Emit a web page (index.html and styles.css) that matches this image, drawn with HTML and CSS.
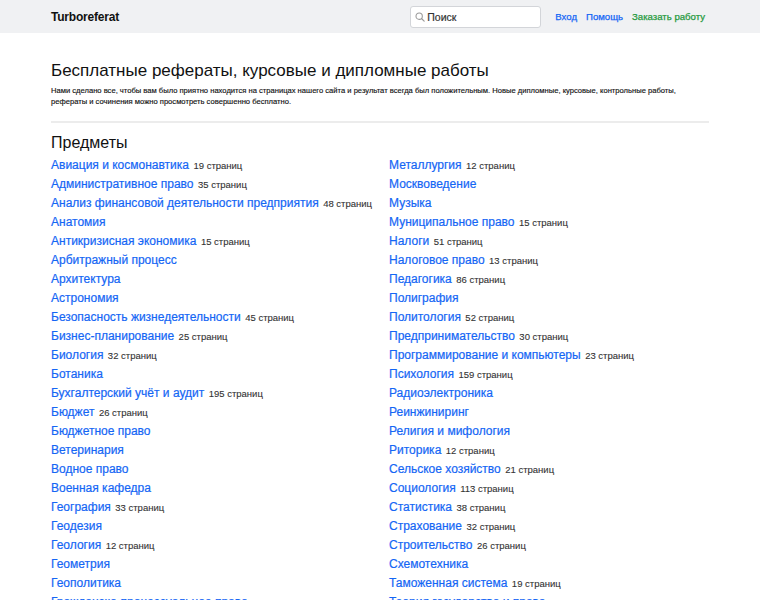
FILE: index.html
```html
<!DOCTYPE html>
<html lang="ru">
<head>
    <meta charset="UTF-8">
    <meta name="viewport" content="width=device-width, initial-scale=1.0">
    <title>Turboreferat</title>
    <link rel="stylesheet" href="styles.css">
</head>
<body>
    <header class="topbar">
        <div class="container topbar-inner">
            <a class="logo" href="#">Turboreferat</a>
            <div class="search">
                <svg class="search-icon" width="10" height="10" viewBox="0 0 12 12">
                    <circle cx="5" cy="5" r="3.8" fill="none" stroke="#9a9a9a" stroke-width="1.3"/>
                    <line x1="7.8" y1="7.8" x2="11" y2="11" stroke="#9a9a9a" stroke-width="1.4" stroke-linecap="round"/>
                </svg>
                <input type="text" placeholder="Поиск">
            </div>
            <nav class="nav">
                <a href="#">Вход</a>
                <a href="#">Помощь</a>
                <a href="#" class="order">Заказать работу</a>
            </nav>
        </div>
    </header>

    <main class="container">
        <h1>Бесплатные рефераты, курсовые и дипломные работы</h1>
        <p class="intro">Нами сделано все, чтобы вам было приятно находится на страницах нашего сайта и результат всегда был положительным. Новые дипломные, курсовые, контрольные работы, рефераты и сочинения можно просмотреть совершенно бесплатно.</p>
        <hr>

        <div class="subjects">
            <div class="col">
                <h2>Предметы</h2>
                <ul>
                    <li><a href="#">Авиация и космонавтика</a> <span>19 страниц</span></li>
                    <li><a href="#">Административное право</a> <span>35 страниц</span></li>
                    <li><a href="#">Анализ финансовой деятельности предприятия</a> <span>48 страниц</span></li>
                    <li><a href="#">Анатомия</a></li>
                    <li><a href="#">Антикризисная экономика</a> <span>15 страниц</span></li>
                    <li><a href="#">Арбитражный процесс</a></li>
                    <li><a href="#">Архитектура</a></li>
                    <li><a href="#">Астрономия</a></li>
                    <li><a href="#">Безопасность жизнедеятельности</a> <span>45 страниц</span></li>
                    <li><a href="#">Бизнес-планирование</a> <span>25 страниц</span></li>
                    <li><a href="#">Биология</a> <span>32 страниц</span></li>
                    <li><a href="#">Ботаника</a></li>
                    <li><a href="#">Бухгалтерский учёт и аудит</a> <span>195 страниц</span></li>
                    <li><a href="#">Бюджет</a> <span>26 страниц</span></li>
                    <li><a href="#">Бюджетное право</a></li>
                    <li><a href="#">Ветеринария</a></li>
                    <li><a href="#">Водное право</a></li>
                    <li><a href="#">Военная кафедра</a></li>
                    <li><a href="#">География</a> <span>33 страниц</span></li>
                    <li><a href="#">Геодезия</a></li>
                    <li><a href="#">Геология</a> <span>12 страниц</span></li>
                    <li><a href="#">Геометрия</a></li>
                    <li><a href="#">Геополитика</a></li>
                    <li><a href="#">Гражданско-процессуальное право</a> <span>12 страниц</span></li>
                </ul>
            </div>
            <div class="col">
                <h2 class="spacer">&nbsp;</h2>
                <ul>
                    <li><a href="#">Металлургия</a> <span>12 страниц</span></li>
                    <li><a href="#">Москвоведение</a></li>
                    <li><a href="#">Музыка</a></li>
                    <li><a href="#">Муниципальное право</a> <span>15 страниц</span></li>
                    <li><a href="#">Налоги</a> <span>51 страниц</span></li>
                    <li><a href="#">Налоговое право</a> <span>13 страниц</span></li>
                    <li><a href="#">Педагогика</a> <span>86 страниц</span></li>
                    <li><a href="#">Полиграфия</a></li>
                    <li><a href="#">Политология</a> <span>52 страниц</span></li>
                    <li><a href="#">Предпринимательство</a> <span>30 страниц</span></li>
                    <li><a href="#">Программирование и компьютеры</a> <span>23 страниц</span></li>
                    <li><a href="#">Психология</a> <span>159 страниц</span></li>
                    <li><a href="#">Радиоэлектроника</a></li>
                    <li><a href="#">Реинжиниринг</a></li>
                    <li><a href="#">Религия и мифология</a></li>
                    <li><a href="#">Риторика</a> <span>12 страниц</span></li>
                    <li><a href="#">Сельское хозяйство</a> <span>21 страниц</span></li>
                    <li><a href="#">Социология</a> <span>113 страниц</span></li>
                    <li><a href="#">Статистика</a> <span>38 страниц</span></li>
                    <li><a href="#">Страхование</a> <span>32 страниц</span></li>
                    <li><a href="#">Строительство</a> <span>26 страниц</span></li>
                    <li><a href="#">Схемотехника</a></li>
                    <li><a href="#">Таможенная система</a> <span>19 страниц</span></li>
                    <li><a href="#">Теория государства и права</a> <span>27 страниц</span></li>
                </ul>
            </div>
        </div>
    </main>
</body>
</html>
```

FILE: styles.css
```css
body {
    font-family: "Liberation Sans", Arial, sans-serif;
    color: #111;
    background-color: #fff;
    margin: 0;
    padding: 0;
}
a {
    text-decoration: none;
}
.container {
    width: 658px;
    margin: 0 auto;
}
.topbar {
    background-color: #f0f1f3;
    height: 33px;
}
.topbar-inner {
    display: flex;
    align-items: center;
    height: 33px;
}
.logo {
    color: #111;
    font-weight: bold;
    font-size: 12px;
    letter-spacing: -0.2px;
}
.search {
    margin-left: auto;
    position: relative;
}
.search-icon {
    position: absolute;
    left: 5px;
    top: 6px;
}
.search input {
    display: block;
    width: 131px;
    height: 22px;
    box-sizing: border-box;
    border: 1px solid #d3d5d9;
    border-radius: 3px;
    padding: 0 0 0 16px;
    font-family: inherit;
    font-size: 10.5px;
    background: #fff;
    -webkit-text-stroke: 0.2px;
}
.search input::placeholder {
    color: #333;
}
.nav {
    display: flex;
    gap: 9px;
    margin-left: 14px;
    margin-right: 4px;
}
.nav a {
    color: #1466f5;
    font-size: 9.6px;
    -webkit-text-stroke: 0.25px;
}
.nav a.order {
    color: #279a3e;
}
h1 {
    font-size: 17px;
    font-weight: normal;
    margin: 28px 0 4px;
}
.intro {
    font-size: 7.6px;
    line-height: 11px;
    margin: 0;
    -webkit-text-stroke: 0.15px;
}
hr {
    border: none;
    border-top: 2px solid #ececec;
    margin: 14px 0 0;
}
.subjects {
    display: grid;
    grid-template-columns: minmax(0, 1fr) minmax(0, 1fr);
    column-gap: 18px;
}
h2 {
    font-size: 16px;
    font-weight: normal;
    margin: 10px 0 0;
    line-height: 20px;
}
ul {
    list-style: none;
    margin: 1px 0 0;
    padding: 0;
}
li {
    height: 19px;
    line-height: 19px;
    white-space: nowrap;
}
li a {
    color: #1466f5;
    font-size: 12px;
    -webkit-text-stroke: 0.2px;
}
li span {
    color: #333;
    font-size: 9.5px;
    -webkit-text-stroke: 0.1px;
}
```
